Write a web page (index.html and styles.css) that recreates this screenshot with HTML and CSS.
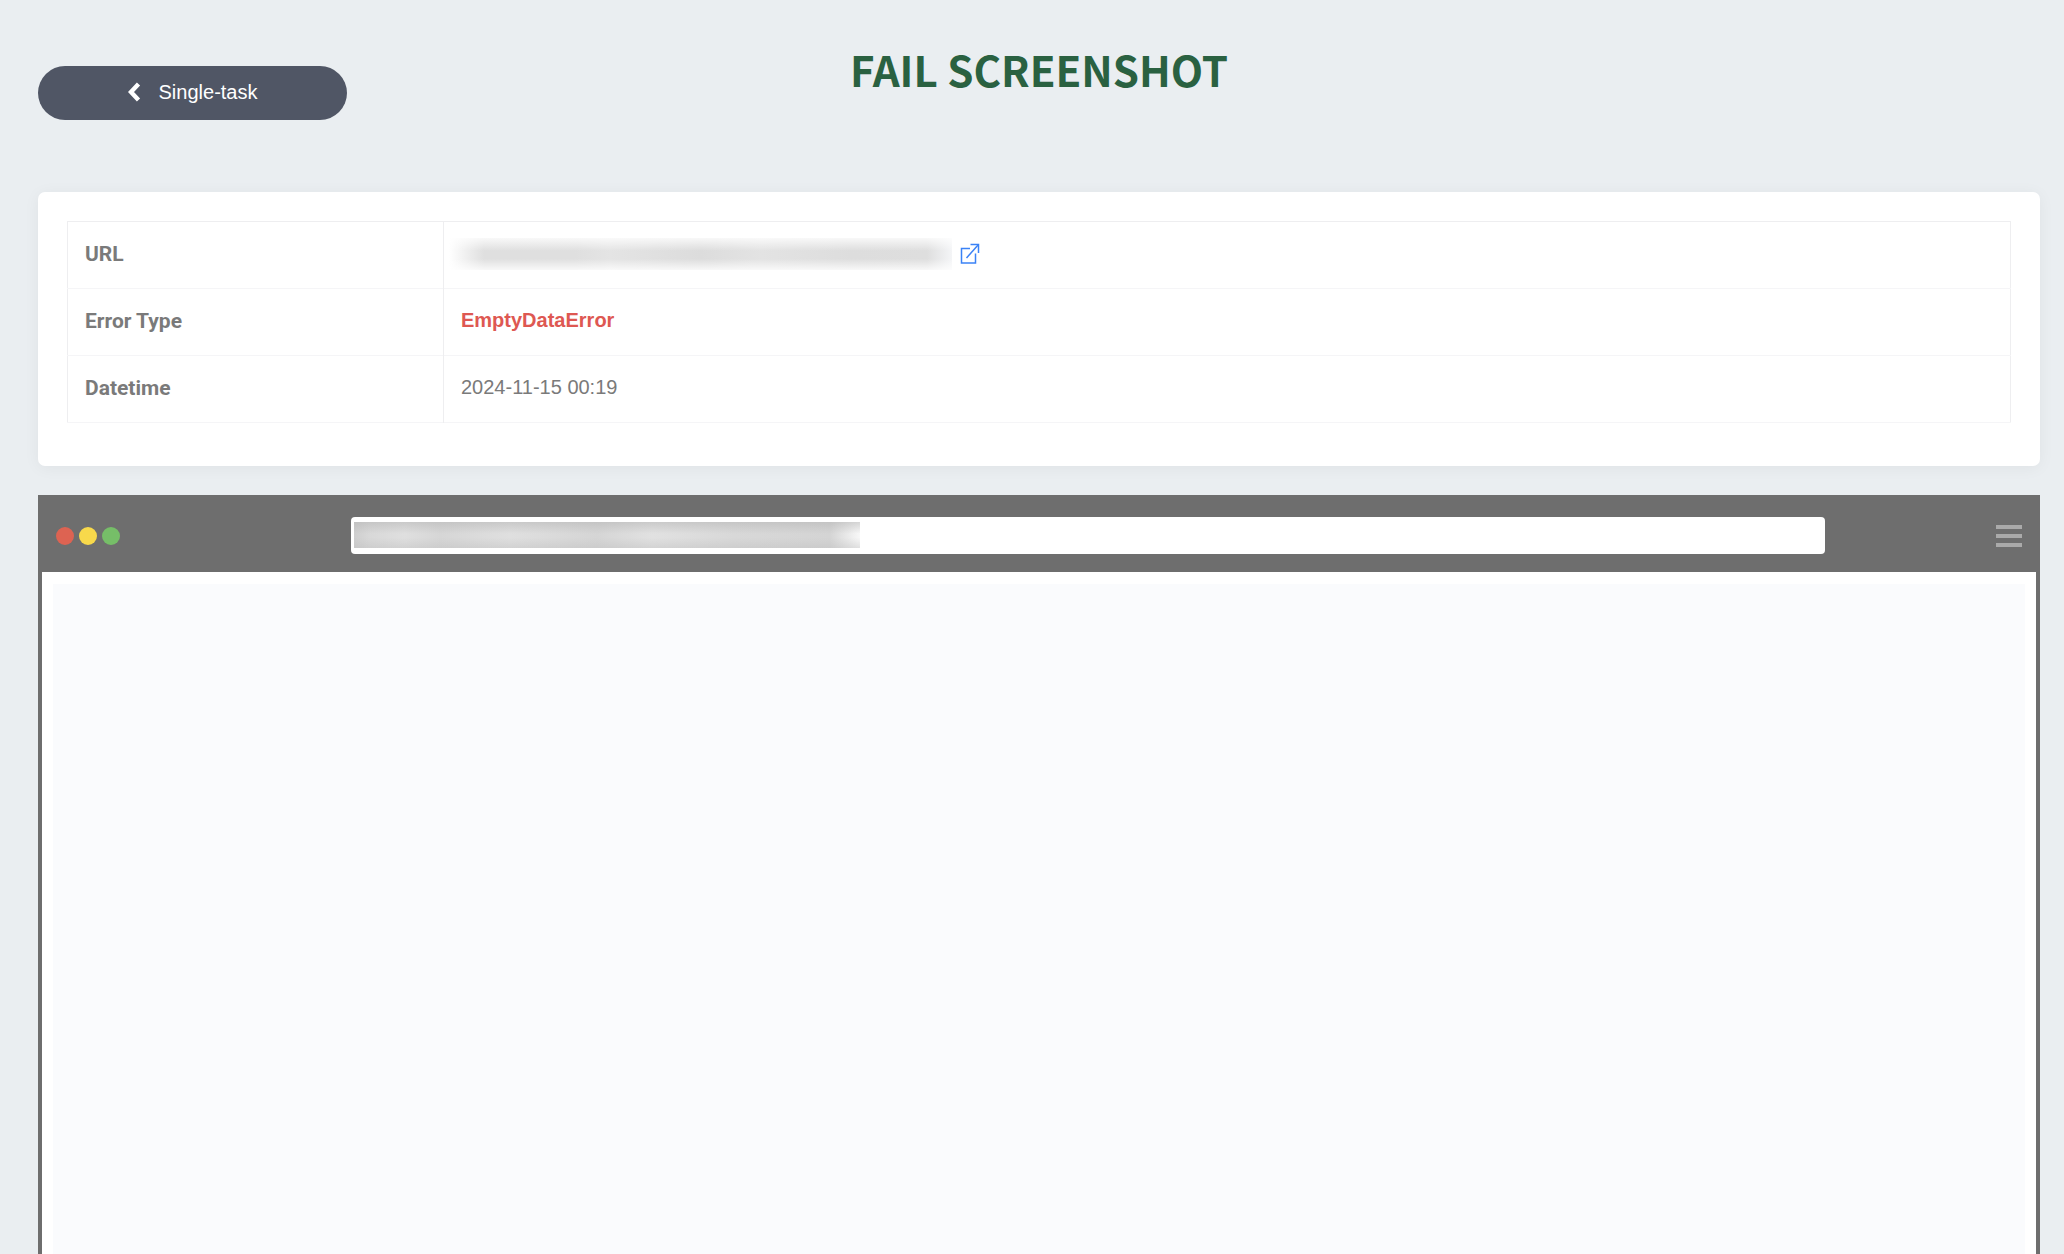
FILE: index.html
```html
<!DOCTYPE html>
<html lang="en">
<head>
    <meta charset="UTF-8">
    <meta name="viewport" content="width=device-width, initial-scale=1.0">
    <title>Fail Screenshot</title>
    <link rel="stylesheet" href="styles.css">
</head>
<body>

    <header class="header">
        <button type="button" class="btn-back">
            <svg width="13" height="20" viewBox="0 0 13 20" aria-hidden="true">
                <path d="M10.5 2 L3 10 L10.5 18" fill="none" stroke="#fff" stroke-width="4.4"/>
            </svg>
            Single-task
        </button>
        <h1>FAIL SCREENSHOT</h1>
    </header>

    <main>
        <div class="card">
            <table class="info">
                <tbody>
                    <tr>
                        <th scope="row">URL</th>
                        <td>
                            <div class="url">
                                <span class="url-hidden"></span>
                                <a href="#" aria-label="Open page">
                                    <svg width="20" height="22" viewBox="0 0 20 22" fill="none" stroke="#3b82f6" stroke-width="1.5" aria-hidden="true">
                                        <path d="M10 5.5H1.5V20H15.5V10.5"/>
                                        <path d="M10.5 1.5H18.5V10"/>
                                        <path d="M18.5 1.5L6.5 15"/>
                                    </svg>
                                </a>
                            </div>
                        </td>
                    </tr>
                    <tr>
                        <th scope="row">Error Type</th>
                        <td class="error">EmptyDataError</td>
                    </tr>
                    <tr>
                        <th scope="row">Datetime</th>
                        <td>2024-11-15 00:19</td>
                    </tr>
                </tbody>
            </table>
        </div>

        <!-- Browser window -->
        <div class="browser">
            <div class="browser-bar">
                <div class="dots">
                    <span class="dot red"></span>
                    <span class="dot yellow"></span>
                    <span class="dot green"></span>
                </div>
                <input type="text" class="address" aria-label="Address" readonly>
                <button type="button" class="menu" aria-label="Menu">
                    <span></span>
                    <span></span>
                    <span></span>
                </button>
            </div>
            <div class="browser-content">
                <div class="shot"></div>
            </div>
        </div>
    </main>

</body>
</html>
```
FILE: styles.css
```css
* {
    box-sizing: border-box;
}
body {
    display: flex;
    flex-direction: column;
    height: 100vh;
    margin: 0;
    padding: 39px 24px 0 38px;
    overflow: hidden;
    background-color: #eaeef1;
    color: #7a7a7a;
    font-family: "Liberation Sans", Arial, sans-serif;
    font-size: 20px;
}
.header {
    display: grid;
    grid-template-columns: 309px 1fr 309px;
    align-items: start;
    padding-bottom: 72px;
}
h1 {
    margin: 0;
    color: #2a6141;
    font-family: "Noto Sans CJK SC", sans-serif;
    font-size: 42px;
    font-weight: 700;
    line-height: 60px;
    text-align: center;
}
.btn-back {
    display: flex;
    align-items: center;
    justify-content: center;
    gap: 18px;
    height: 54px;
    margin-top: 27px;
    padding: 0 0 2px;
    border: none;
    border-radius: 27px;
    background-color: #505665;
    color: white;
    font: inherit;
    cursor: pointer;
}
main {
    display: flex;
    flex: 1;
    flex-direction: column;
    gap: 29px;
}
.card {
    padding: 29px 29px 43px;
    border-radius: 7px;
    background: white;
    box-shadow: 0 2px 16px rgba(0, 0, 0, 0.05);
}
.info {
    width: 100%;
    border: 1px solid #eeeef0;
    border-collapse: collapse;
    table-layout: fixed;
}
.info tr {
    border-bottom: 1px solid #f5f5f7;
}
th, td {
    height: 67px;
    padding: 0 17px 3px;
    text-align: left;
}
th {
    width: 376px;
    border-right: 1px solid #eeeef0;
    font-family: Roboto, sans-serif;
    font-size: 21px;
    font-weight: 700;
}
.error {
    color: #de5852;
    font-weight: 700;
}
.url {
    display: flex;
    align-items: center;
    gap: 8px;
    margin-left: -12px;
}
.url a {
    display: flex;
}
.url-hidden {
    width: 503px;
    height: 32px;
    background:
        linear-gradient(rgba(255, 255, 255, 0.8), transparent 40%, transparent 65%, rgba(255, 255, 255, 0.8)),
        linear-gradient(90deg, white, #dfdfdf 7%, #dfdfdf 25%, #e4e4e4 32%, #dcdcdc 50%, #e3e3e3 62%, #dddddd 80%, #dedede 95%, #f4f5f7);
}
.browser {
    display: flex;
    flex: 1;
    flex-direction: column;
    border: 4px solid #6e6e6e;
    border-width: 0 4px;
    background: white;
}
.browser-bar {
    display: grid;
    grid-template-columns: 15% 75% 10%;
    align-items: center;
    height: 77px;
    padding: 4px 14px 0;
    background: #6e6e6e;
}
.dots {
    display: flex;
    gap: 5px;
}
.dot {
    width: 18px;
    height: 18px;
    border-radius: 50%;
}
.red {
    background: #dd6352;
}
.yellow {
    background: #f8d94b;
}
.green {
    background: #76be68;
}
.address {
    width: 100%;
    height: 37px;
    padding: 0 8px;
    border: none;
    border-radius: 4px;
    background:
        linear-gradient(rgba(180, 180, 180, 0.5), transparent 45%, transparent 60%, rgba(190, 190, 190, 0.4)) 3px 5px / 506px 26px no-repeat,
        linear-gradient(90deg, #cecece, #d8d8d8 3%, #dfdfdf 10%, #d6d6d6 17%, #dfdfdf 31%, #d5d5d5 48%, #e1e1e1 59%, #d8d8d8 75%, #d4d4d4 94%, #f8f8f8) 3px 5px / 506px 26px no-repeat,
        white;
}
.menu {
    display: flex;
    flex-direction: column;
    gap: 5px;
    width: 26px;
    margin-left: auto;
    padding: 0;
    border: none;
    background: none;
    cursor: pointer;
}
.menu span {
    height: 4px;
    background: #aaaaaa;
}
.browser-content {
    display: flex;
    flex: 1;
    padding: 12px 11px 0;
}
.shot {
    flex: 1;
    background: #fafbfd;
}
```
